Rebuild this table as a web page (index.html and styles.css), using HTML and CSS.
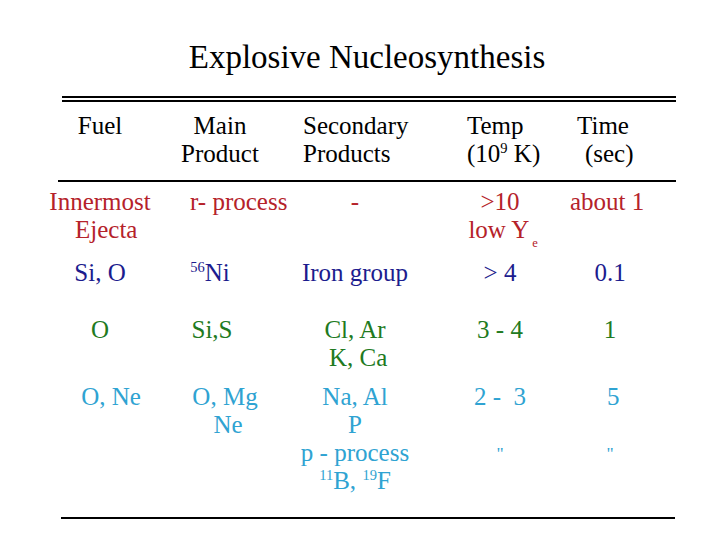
FILE: index.html
```html
<!DOCTYPE html>
<html>
<head>
<meta charset="utf-8">
<link rel="stylesheet" href="styles.css">
</head>
<body>
<div class="slide">
  <h1 class="title">Explosive Nucleosynthesis</h1>
  <div class="rule double"></div>
  <div class="grid head">
    <div class="c1">Fuel</div>
    <div class="c2">Main<br>Product</div>
    <div class="c3 left3">Secondary<br>Products</div>
    <div class="c4 left4">Temp<br>(10<sup>9</sup> K)</div>
    <div class="c5 time">Time<br>&nbsp;&nbsp;(sec)</div>
  </div>
  <div class="rule single mid"></div>
  <div class="grid row r1 red">
    <div class="c1">Innermost<br>&nbsp;&nbsp;Ejecta</div>
    <div class="c2 left2">r- process</div>
    <div class="c3">-</div>
    <div class="c4">&gt;10<br>&nbsp;low Y<sub>e</sub></div>
    <div class="c5 time">about 1</div>
  </div>
  <div class="grid row r2 blue">
    <div class="c1">Si, O</div>
    <div class="c2 shift-l10"><sup>56</sup>Ni</div>
    <div class="c3">Iron group</div>
    <div class="c4">&gt; 4</div>
    <div class="c5">0.1</div>
  </div>
  <div class="grid row r3 green">
    <div class="c1">O</div>
    <div class="c2 shift-l8">Si,S</div>
    <div class="c3">Cl, Ar<br>&nbsp;K, Ca</div>
    <div class="c4">3 - 4</div>
    <div class="c5">1</div>
  </div>
  <div class="grid row r4 cyan">
    <div class="c1 shift-r11">O, Ne</div>
    <div class="c2 shift-r5">O, Mg<br>&nbsp;Ne</div>
    <div class="c3">Na, Al<br>P<br>p - process<br><sup>11</sup>B, <sup>19</sup>F</div>
    <div class="c4">2 -&nbsp; 3<br>&nbsp;<br><span class="ditto">"</span></div>
    <div class="c5">&nbsp;5<br>&nbsp;<br><span class="ditto">"</span></div>
  </div>
  <div class="rule single bottom"></div>
</div>
</body>
</html>
```

FILE: styles.css
```css
html, body {
  margin: 0;
  padding: 0;
  background: #ffffff;
}

body {
  width: 720px;
  height: 540px;
  overflow: hidden;
  font-family: "Liberation Serif", "Times New Roman", serif;
  color: #000;
}

.slide {
  display: flex;
  flex-direction: column;
  padding-top: 37px;
}

.title {
  margin: 0;
  font-weight: normal;
  font-size: 33px;
  line-height: 40px;
  text-align: center;
  padding-left: 14px;
}

.rule {
  margin-left: 62px;
  width: 614px;
}

.double {
  margin-top: 19px;
  height: 2px;
  border-top: 2px solid #000;
  border-bottom: 2px solid #000;
}

.single {
  height: 2px;
  background: #000;
}

.mid {
  margin-left: 58px;
  width: 618px;
  margin-top: 12px;
}

.bottom {
  margin-left: 61px;
  margin-top: 22px;
}

.grid {
  display: grid;
  grid-template-columns: 120px 120px 150px 140px 80px;
  margin-left: 40px;
  font-size: 25px;
  line-height: 28px;
  text-align: center;
  white-space: nowrap;
}

.head { margin-top: 10px; }
.r1 { margin-top: 6px; }
.r2 { margin-top: 15px; }
.r3 { margin-top: 29px; }
.r4 { margin-top: 11px; }

.left2 { text-align: left; padding-left: 30px; }
.left3 { text-align: left; padding-left: 23px; }
.left4 { text-align: left; padding-left: 37px; }
.time { padding-right: 14px; }

.shift-r11 { padding-left: 22px; }
.shift-r5 { padding-left: 10px; }
.shift-l10 { padding-right: 20px; }
.shift-l8 { padding-right: 16px; }

sup {
  font-size: 0.58em;
  line-height: 0;
  vertical-align: 0.6em;
}

sub {
  font-size: 0.5em;
  line-height: 0;
  vertical-align: -0.7em;
  margin-left: 3px;
}

.ditto {
  font-size: 0.7em;
  vertical-align: 0.2em;
}

.red { color: #b5222a; }
.blue { color: #1c1c8e; }
.green { color: #217a21; }
.cyan { color: #2fa3d2; }
```
